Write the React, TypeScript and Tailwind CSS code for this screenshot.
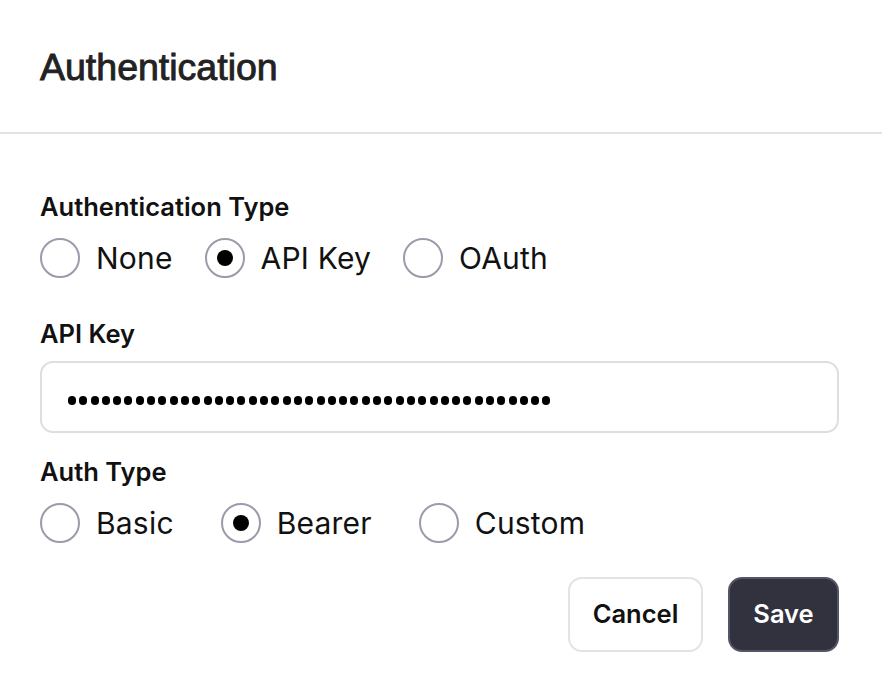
import { useState } from "react";

const sans = "font-['Inter','Noto_Sans',sans-serif]";

interface RadioGroupProps {
  options: string[];
  value: string;
  onChange: (v: string) => void;
  gap: string;
}

const RadioGroup = ({ options, value, onChange, gap }: RadioGroupProps) => (
  <div className={`flex items-center ${gap}`}>
    {options.map((opt) => (
      <label
        key={opt}
        className="flex items-center gap-[16px] cursor-pointer"
        onClick={() => onChange(opt)}
      >
        <span className="w-[40px] h-[40px] rounded-full border-2 border-[#9c9aab] flex items-center justify-center bg-white">
          {value === opt && (
            <span className="w-[16px] h-[16px] rounded-full bg-black" />
          )}
        </span>
        <span className="text-[30px] leading-[40px] tracking-[0.2px] text-[#111]">
          {opt}
        </span>
      </label>
    ))}
  </div>
);

export default function App() {
  const [authType, setAuthType] = useState("API Key");
  const [scheme, setScheme] = useState("Bearer");

  return (
    <div className={`w-[882px] h-[694px] bg-white ${sans}`}>
      <div className="h-[134px] flex items-center px-[40px] border-b-2 border-[#e3e3e3]">
        <h2 className="font-['Liberation_Sans',Arial,sans-serif] text-[37.5px] text-[#222] [-webkit-text-stroke:0.9px_#222] pt-[2px]">
          Authentication
        </h2>
      </div>

      <div className="pl-[40px] pr-[43px] pt-[58px]">
        <div className="text-[25.5px] leading-[30px] font-semibold text-[#111]">
          Authentication Type
        </div>
        <div className="mt-[16px]">
          <RadioGroup
            options={["None", "API Key", "OAuth"]}
            value={authType}
            onChange={setAuthType}
            gap="gap-[32px]"
          />
        </div>

        <div className="mt-[41px] text-[25.5px] leading-[30px] font-semibold text-[#111]">
          API Key
        </div>
        <div className="mt-[12px] h-[72px] rounded-[13px] border-2 border-[#dedede] flex items-center pl-[26px] pt-[6px]">
          <div className="flex gap-[3.3px]">
            {Array.from({ length: 43 }).map((_, i) => (
              <span key={i} className="w-[8px] h-[9px] rounded-full bg-black" />
            ))}
          </div>
        </div>

        <div className="mt-[24px] text-[25.5px] leading-[30px] font-semibold text-[#111]">
          Auth Type
        </div>
        <div className="mt-[16px]">
          <RadioGroup
            options={["Basic", "Bearer", "Custom"]}
            value={scheme}
            onChange={setScheme}
            gap="gap-[47px]"
          />
        </div>

        <div className="mt-[34px] flex justify-end gap-[25px]">
          <button className="w-[135px] h-[75px] rounded-[14px] border-2 border-[#e3e3e3] bg-white text-[25.5px] font-semibold text-[#111]">
            Cancel
          </button>
          <button className="w-[111px] h-[75px] rounded-[14px] border-2 border-[#55556a] bg-[#32323f] text-[25.5px] font-semibold text-white">
            Save
          </button>
        </div>
      </div>
    </div>
  );
}
